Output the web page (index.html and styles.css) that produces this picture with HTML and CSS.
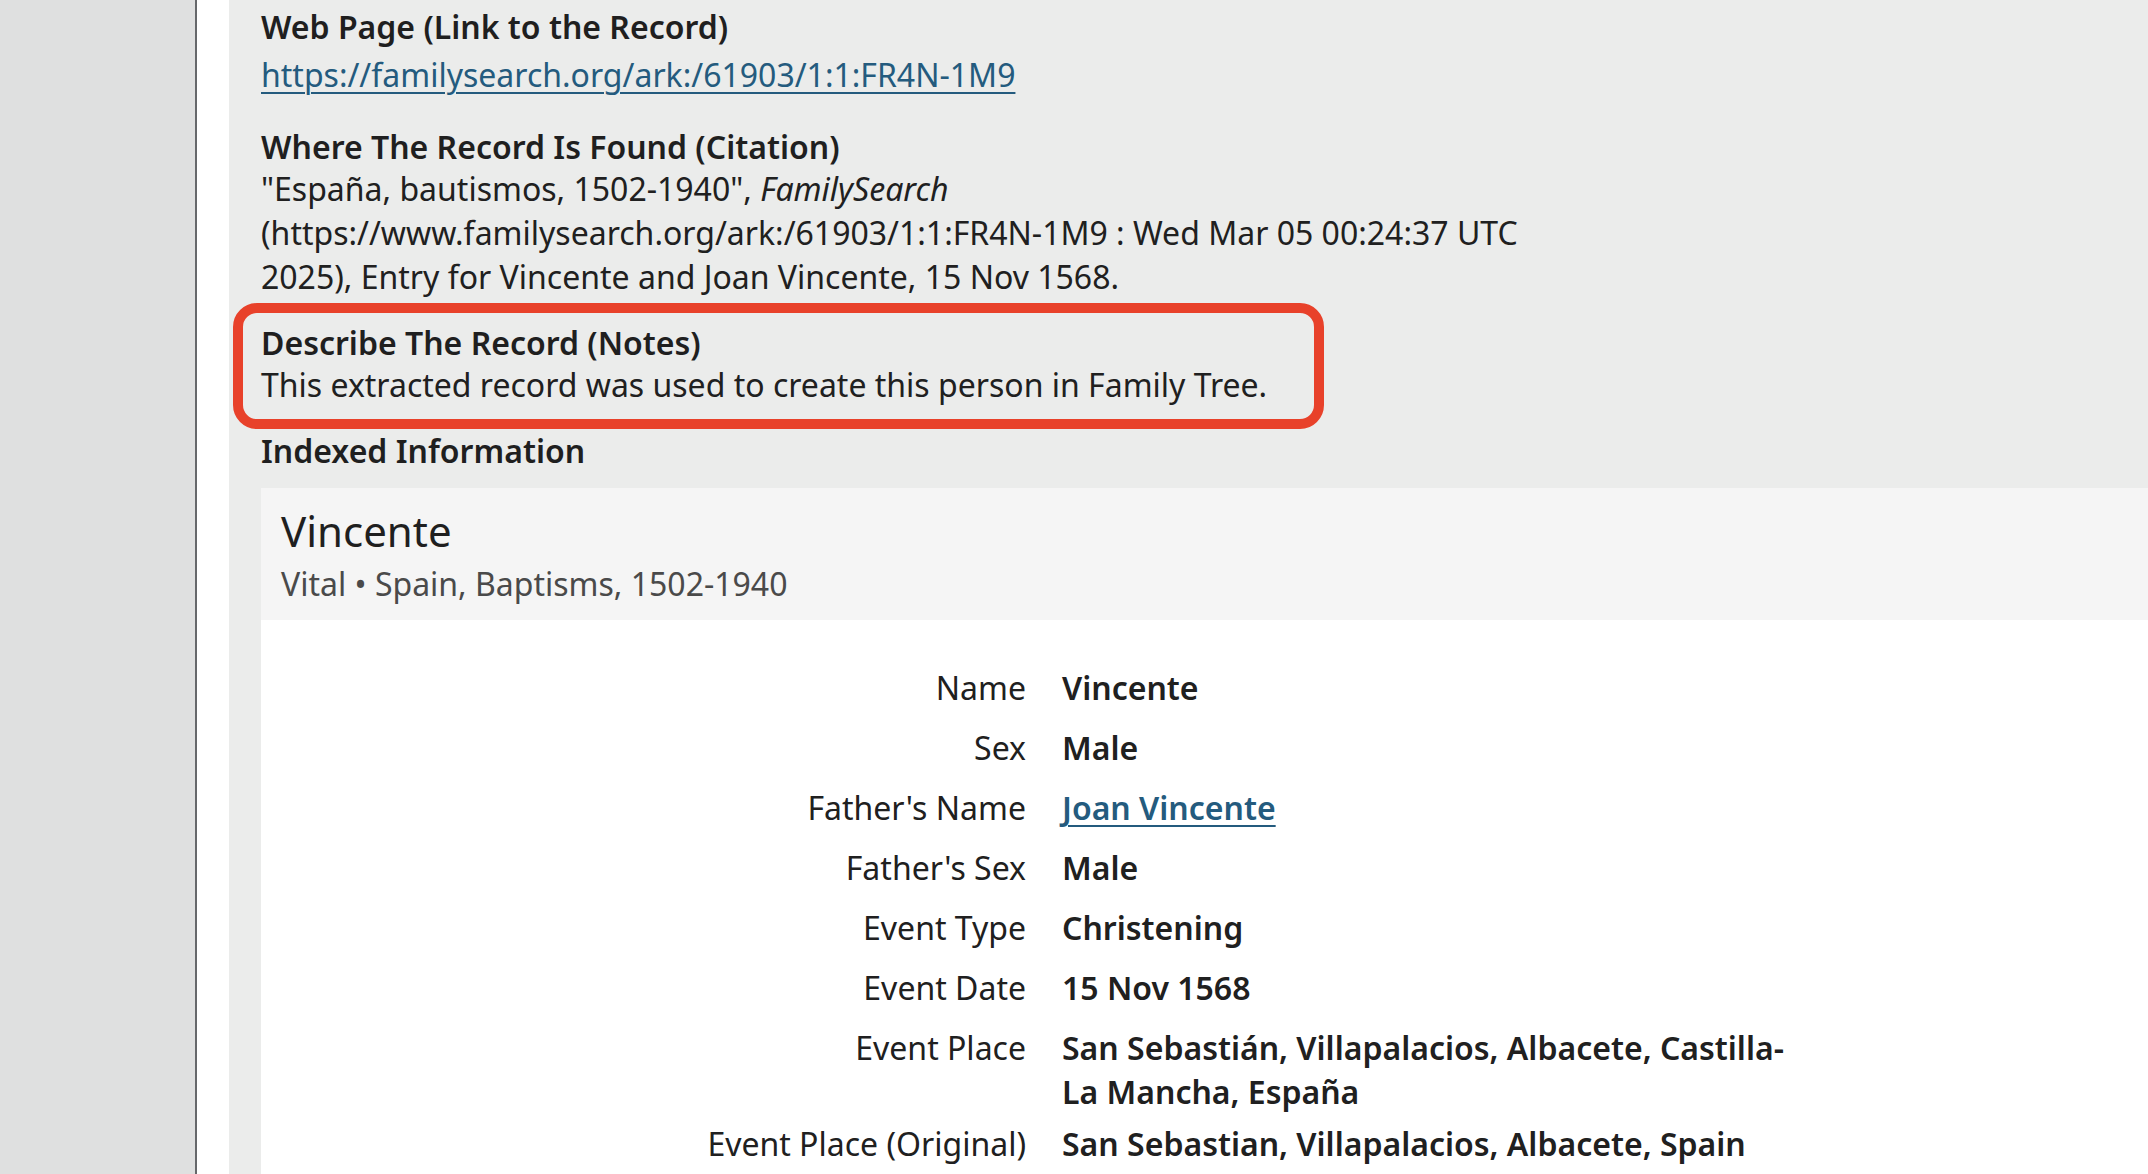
FILE: index.html
```html
<!DOCTYPE html>
<html lang="en">
<head>
    <meta charset="UTF-8">
    <meta name="viewport" content="width=device-width, initial-scale=1.0">
    <title>Source Details</title>
    <link rel="stylesheet" href="styles.css">
</head>
<body>

<aside class="sidebar"></aside>

<main class="page">
    <div class="panel">
        <section class="field">
            <h3 class="field-title">Web Page (Link to the Record)</h3>
            <a class="record-link" href="#">https://familysearch.org/ark:/61903/1:1:FR4N-1M9</a>
        </section>

        <section class="field">
            <h3 class="field-title">Where The Record Is Found (Citation)</h3>
            <p class="field-text citation">"España, bautismos, 1502-1940", <i>FamilySearch</i> (https://www.familysearch.org/ark:/61903/1:1:FR4N-1M9 : Wed Mar 05 00:24:37 UTC 2025), Entry for Vincente and Joan Vincente, 15 Nov 1568.</p>
        </section>

        <!-- marked section -->
        <section class="field highlighted">
            <h3 class="field-title">Describe The Record (Notes)</h3>
            <p class="field-text">This extracted record was used to create this person in Family Tree.</p>
        </section>

        <section class="field">
            <h3 class="field-title">Indexed Information</h3>
        </section>

        <div class="record-card">
            <div class="record-head">
                <div class="record-name">Vincente</div>
                <div class="record-sub">Vital • Spain, Baptisms, 1502-1940</div>
            </div>
            <div class="record-body">
                <div class="fact-row">
                    <span class="fact-label">Name</span>
                    <span class="fact-value">Vincente</span>
                </div>
                <div class="fact-row">
                    <span class="fact-label">Sex</span>
                    <span class="fact-value">Male</span>
                </div>
                <div class="fact-row">
                    <span class="fact-label">Father's Name</span>
                    <span class="fact-value"><a href="#">Joan Vincente</a></span>
                </div>
                <div class="fact-row">
                    <span class="fact-label">Father's Sex</span>
                    <span class="fact-value">Male</span>
                </div>
                <div class="fact-row">
                    <span class="fact-label">Event Type</span>
                    <span class="fact-value">Christening</span>
                </div>
                <div class="fact-row">
                    <span class="fact-label">Event Date</span>
                    <span class="fact-value">15 Nov 1568</span>
                </div>
                <div class="fact-row">
                    <span class="fact-label">Event Place</span>
                    <span class="fact-value">San Sebastián, Villapalacios, Albacete, Castilla-La Mancha, España</span>
                </div>
                <div class="fact-row">
                    <span class="fact-label">Event Place (Original)</span>
                    <span class="fact-value">San Sebastian, Villapalacios, Albacete, Spain</span>
                </div>
            </div>
        </div>
    </div>
</main>

</body>
</html>
```

FILE: styles.css
```css
body {
    font-family: 'Noto Sans', 'Open Sans', sans-serif;
    margin: 0;
    padding: 0;
    display: flex;
    height: 100vh;
    overflow: hidden;
    background-color: #ffffff;
    color: #202020;
    font-size: 32px;
}
.sidebar {
    width: 195px;
    flex-shrink: 0;
    background-color: #dfe0e0;
    border-right: 2px solid #66686b;
}
.page {
    flex: 1;
    padding-left: 32px;
    background-color: #ffffff;
    min-width: 0;
}
.panel {
    background-color: #ebeceb;
    padding: 7px 0 0 32px;
    height: 100%;
    box-sizing: border-box;
}
.field {
    margin-bottom: 24px;
}
.field-title {
    font-size: 32px;
    font-weight: 600;
    line-height: 40px;
    margin: 0;
    color: #1f1f1f;
}
.field-text {
    margin: 0;
    line-height: 44px;
}
.citation {
    max-width: 1300px;
}
.record-link {
    display: inline-block;
    line-height: 56px;
    color: #245b7e;
    text-decoration: underline;
    text-decoration-thickness: 2px;
    text-underline-offset: 5px;
}
/* red annotation around the notes */
.highlighted {
    position: relative;
}
.highlighted::after {
    content: "";
    position: absolute;
    top: -20px;
    bottom: -22px;
    left: -28px;
    width: 1091px;
    box-sizing: border-box;
    border: 10px solid #e8412a;
    border-radius: 24px;
    pointer-events: none;
}
.field:last-of-type {
    margin-bottom: 17px;
}
.record-card {
    background-color: #ffffff;
}
.record-head {
    background-color: #f5f5f5;
    padding: 12px 20px 14px;
}
.record-name {
    font-size: 42px;
    line-height: 62px;
    color: #1f1f1f;
}
.record-sub {
    line-height: 44px;
    color: #4a4a4a;
}
.record-body {
    padding-top: 38px;
}
.fact-row {
    display: flex;
    align-items: baseline;
}
.fact-label {
    width: 765px;
    flex-shrink: 0;
    text-align: right;
    line-height: 60px;
}
.fact-value {
    width: 740px;
    margin-left: 36px;
    font-weight: 600;
    line-height: 44px;
}
.fact-value a {
    color: #245b7e;
    text-decoration: underline;
    text-decoration-thickness: 2px;
    text-underline-offset: 5px;
}
```
